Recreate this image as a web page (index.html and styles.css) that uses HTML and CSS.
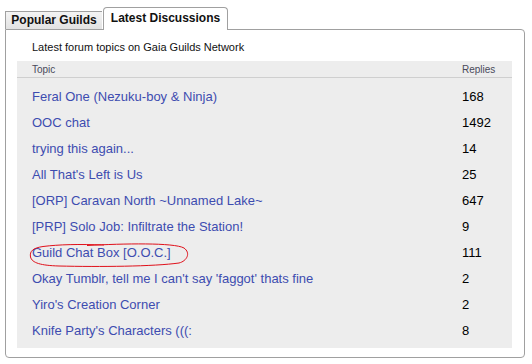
FILE: index.html
```html
<!DOCTYPE html>
<html>
<head>
<meta charset="utf-8">
<link rel="stylesheet" href="styles.css">
</head>
<body>
<div class="widget">
  <div class="tabs">
    <div class="tab">Popular Guilds</div>
    <div class="tab active">Latest Discussions</div>
  </div>
  <div class="panel">
    <div class="subtitle">Latest forum topics on Gaia Guilds Network</div>
    <div class="table">
      <div class="row head"><span>Topic</span><span>Replies</span></div>
      <div class="rows">
        <div class="row"><a>Feral One (Nezuku-boy &amp; Ninja)</a><span>168</span></div>
        <div class="row"><a>OOC chat</a><span>1492</span></div>
        <div class="row"><a>trying this again...</a><span>14</span></div>
        <div class="row"><a>All That's Left is Us</a><span>25</span></div>
        <div class="row"><a>[ORP] Caravan North ~Unnamed Lake~</a><span>647</span></div>
        <div class="row"><a>[PRP] Solo Job: Infiltrate the Station!</a><span>9</span></div>
        <div class="row marked"><a>Guild Chat Box [O.O.C.]</a><span>111</span>
          <svg class="circle" width="160" height="26" viewBox="0 0 160 26"><path d="M58 3.5 C95 1.5 145 0.5 155 6 C162 11 158 19 150 21 C125 24.5 70 25 30 24 C12 23.5 3 21 1.5 15 C0.5 9 4 6 14 4.5 C30 2.5 50 2 75 3"/></svg>
        </div>
        <div class="row"><a>Okay Tumblr, tell me I can't say 'faggot' thats fine</a><span>2</span></div>
        <div class="row"><a>Yiro's Creation Corner</a><span>2</span></div>
        <div class="row"><a>Knife Party's Characters (((:</a><span>8</span></div>
      </div>
    </div>
  </div>
</div>
</body>
</html>
```

FILE: styles.css
```css
body {
  margin: 0;
  font-family: "Liberation Sans", Arial, sans-serif;
  background: #fff;
  color: #000;
}
.widget {
  margin: 7px 0 0 5px;
  width: 520px;
}
.tabs {
  display: flex;
  align-items: flex-end;
  height: 22px;
  position: relative;
  z-index: 1;
}
.tab {
  box-sizing: border-box;
  height: 18px;
  line-height: 17px;
  width: 97px;
  white-space: nowrap;
  border: 1px solid #a0a0a0;
  border-bottom: none;
  border-right: none;
  background: linear-gradient(#f4f4f4, #e2e2e2);
  font-size: 12px;
  font-weight: bold;
  color: #111;
  text-align: center;
}
.tab.active {
  height: 23px;
  line-height: 21px;
  width: 125px;
  border-right: 1px solid #a0a0a0;
  border-radius: 4px 4px 0 0;
  background: #fff;
  margin-bottom: -1px;
  margin-left: 1px;
}
.panel {
  border: 1px solid #a0a0a0;
  border-radius: 0 4px 4px 4px;
  height: 327px;
  padding: 0 11px;
  box-sizing: content-box;
}
.subtitle {
  font-size: 11px;
  line-height: 14px;
  padding: 10px 0 0 15px;
  height: 21px;
  color: #111;
}
.table {
  background: #ededed;
  width: 495px;
  padding-bottom: 5px;
}
.row {
  display: grid;
  grid-template-columns: 430px 1fr;
  padding-left: 15px;
  height: 26px;
  align-items: center;
  font-size: 13px;
  position: relative;
}
.row a {
  color: #3d4cb0;
}
.row.head {
  height: 16px;
  border-bottom: 1px solid #cfcfcf;
  font-size: 10px;
  color: #4a4a5a;
}
.rows {
  padding-top: 5px;
}
.circle {
  position: absolute;
  left: 12px;
  top: 3px;
}
.circle path {
  fill: none;
  stroke: #e0101a;
  stroke-width: 1;
}
```
